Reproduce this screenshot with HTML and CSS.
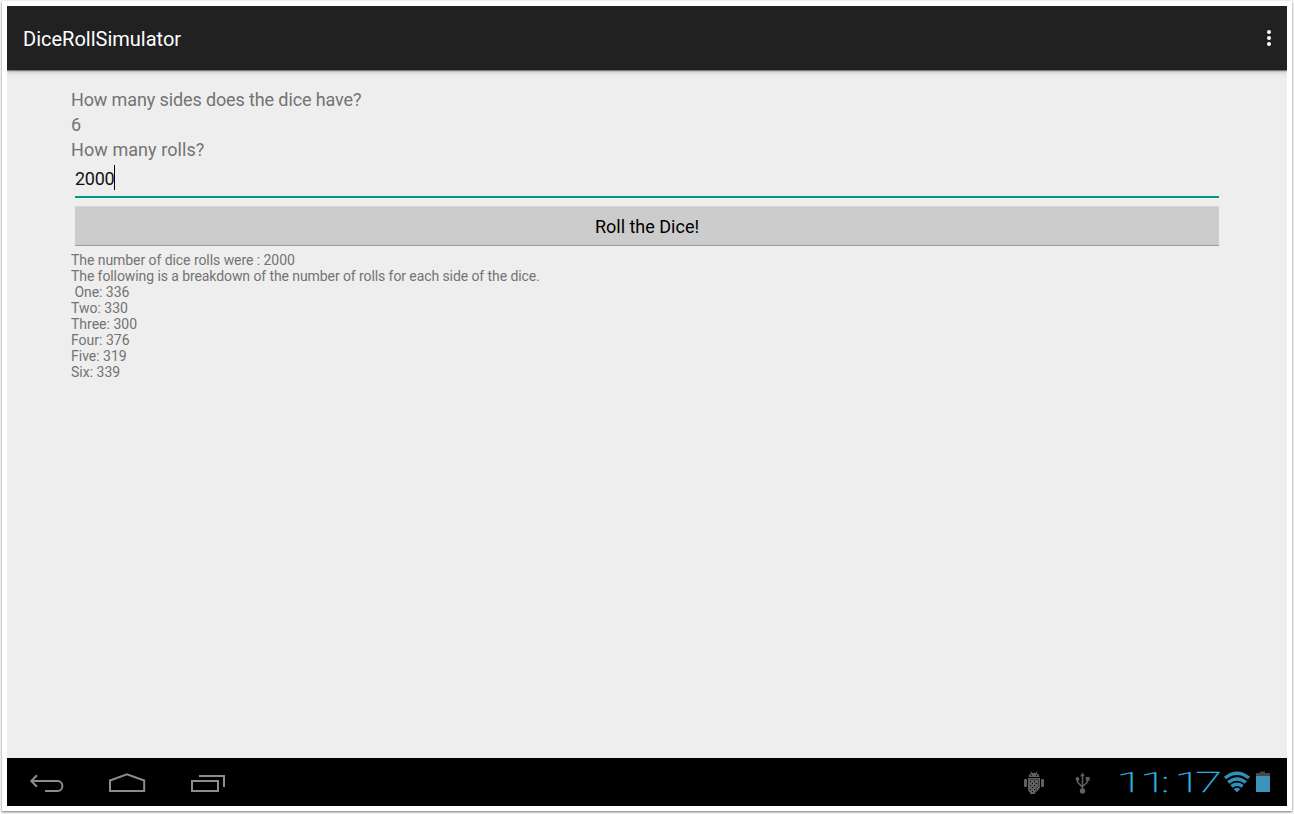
FILE: index.html
```html
<!DOCTYPE html>
<html lang="en">
<head>
<meta charset="utf-8">
<title>DiceRollSimulator</title>
<link rel="stylesheet" href="styles.css">
</head>
<body>
<div class="frame">
<div class="screen">
  <header class="bar">
    <h1 class="title">DiceRollSimulator</h1>
    <div class="overflow"><i></i><i></i><i></i></div>
  </header>
  <main class="content">
    <div class="label"><span class="q1">How many sides does the dice have?</span></div>
    <div class="label"><span>6</span></div>
    <div class="label"><span class="q2">How many rolls?</span></div>
    <div class="input"><span class="value">2000</span><span class="caret"></span></div>
    <button class="roll"><span class="roll-text">Roll the Dice!</span></button>
    <div class="result">
      <div><span class="r1">The number of dice rolls were : 2000</span></div>
      <div><span class="r2">The following is a breakdown of the number of rolls for each side of the dice.</span></div>
      <div><span class="r3">&nbsp;One: 336</span></div>
      <div><span>Two: 330</span></div>
      <div><span>Three: 300</span></div>
      <div><span>Four: 376</span></div>
      <div><span>Five: 319</span></div>
      <div><span>Six: 339</span></div>
    </div>
  </main>
  <footer class="nav">
    <svg class="keys" width="240" height="48" viewBox="7 758 240 48" fill="none" stroke="#8c8c8c" stroke-width="2">
      <path d="M37 775.300 31.300 781l5.700 5.700M31.500 781h26c6.500 0 6.500 10 0 10H45"/>
      <path d="M110 780.500 127 774.200 144.200 780.500V791H110z"/>
      <path d="M192 781h26v10h-26zM199 776h25v11"/>
    </svg>
    <svg class="status" width="280" height="48" viewBox="1007 758 280 48">
      <g fill="#606060">
        <path d="M1028.500 777q.3-3 3-3.700l-1.300-1.300.8-.4 1.400 1.400h3.200l1.400-1.400.8.4-1.300 1.300q2.700.7 3 3.700z"/>
        <rect x="1024" y="779" width="3" height="8" rx="1"/>
        <rect x="1041" y="779" width="3" height="8" rx="1"/>
        <path d="M1028 778h12v9.500l-2 3-3 2.500v1h-5v-2h-1l-1-2z"/>
      </g>
      <g fill="#000">
        <rect x="1031" y="775" width="1" height="1"/><rect x="1036" y="775" width="1" height="1"/>
        <path d="M1030 781h1v1h-1zM1034 781h1v1h-1zM1032 783h1v1h-1zM1036 783h1v1h-1zM1030 785h1v1h-1zM1034 785h1v1h-1zM1032 787h1v1h-1zM1030 789h1v1h-1zM1034 789h1v1h-1zM1032 791h1v1h-1z"/>
      </g>
      <path d="M1029.500 779.500h9v6.500l-2 2v3l-2 2" fill="none" stroke="#333" stroke-width=".8"/>
      <g fill="none" stroke="#606060" stroke-width="1.500">
        <path d="M1082.500 775v15M1077.500 779v2.500q0 1 1 1.700l4 4M1087.500 779v1.500q0 1.500-1 2.500l-4 3.500"/>
      </g>
      <g fill="#606060"><path d="M1082.500 772.500l2.300 3.800h-4.600z"/><circle cx="1077.500" cy="779" r="1.900"/><rect x="1085.800" y="777" width="3.800" height="3.700"/><circle cx="1082.500" cy="791" r="2.700"/></g>
      <g transform="translate(0 792) scale(1.75 1)">
        <text class="clock" y="0" x="638 651.600 663.500 671.100 683">11:17</text>
      </g>
      <g fill="none" stroke="#318fba" stroke-width="3.400">
        <path d="M1225 778q12-9.600 24 0"/><path d="M1228.200 782.300q8.800-6.800 17.600 0"/><path d="M1231.400 786.400q5.600-4.200 11.200 0"/>
      </g>
      <path d="M1233.700 789q3.300-2.300 6.600 0l-3.300 3.400z" fill="#318fba"/>
      <path d="M1256 773h4v-1.500h5v1.500h5v3h-14z" fill="#484848"/>
      <rect x="1256" y="776" width="14" height="16" fill="#3b94b9"/>
    </svg>
  </footer>
</div>
</div>
</body>
</html>
```
FILE: styles.css
```css
* { box-sizing: border-box; }
body { margin: 0; width: 1294px; height: 814px; padding: 1px 2px 3px; overflow: hidden; background: #f7f7f7; font-family: Roboto, sans-serif; }
.frame { height: 810px; padding: 5px; background: #fff; box-shadow: 0 1px 2px #777; }
.screen { height: 800px; display: flex; flex-direction: column; background: #eee; }
.bar { height: 64px; display: flex; flex: none; align-items: center; justify-content: space-between; padding: 0 16px; background: #212121; box-shadow: 0 1px 1px #777, 0 2px 5px #bbb; clip-path: inset(0 0 -9px 0); }
.title { margin: 0; padding-top: 2px; font-size: 20px; font-weight: 400; color: #fff; }
.overflow { display: flex; flex-direction: column; gap: 2px; }
.overflow i { width: 4px; height: 4px; border-radius: 50%; background: #fff; }
.content { flex: 1; padding: 17px 64px 0; color: #737373; }
.label { height: 25px; font-size: 18px; line-height: 25px; }
.q1 { letter-spacing: -.12px; }
.q2 { letter-spacing: .07px; }
.input { height: 36px; margin: 0 4px; display: flex; align-items: flex-start; border-bottom: 2px solid #009688; font-size: 18px; line-height: 33px; color: #111; }
.value { letter-spacing: -.25px; }
.caret { width: 1px; height: 25px; margin-top: 3px; background: #000; }
.roll { display: block; width: 1144px; height: 40px; margin: 8px 4px 0; padding: 1px 0 0; border: 0; border-top: 1px solid #d5d5d5; border-bottom: 1px solid #999; border-radius: 1px; background: #ccc; font: 18px Roboto, sans-serif; color: #000; }
.result { margin-top: 6px; font-size: 14px; line-height: 16px; }
.r1 { letter-spacing: -.06px; }
.r2 { letter-spacing: -.085px; }
.r3 { letter-spacing: -.05px; }
.nav { height: 48px; display: flex; justify-content: space-between; background: #000; }
.clock { font: 100 28px Roboto, sans-serif; fill: #33b5e5; stroke: #33b5e5; stroke-width: .35px; }
```
